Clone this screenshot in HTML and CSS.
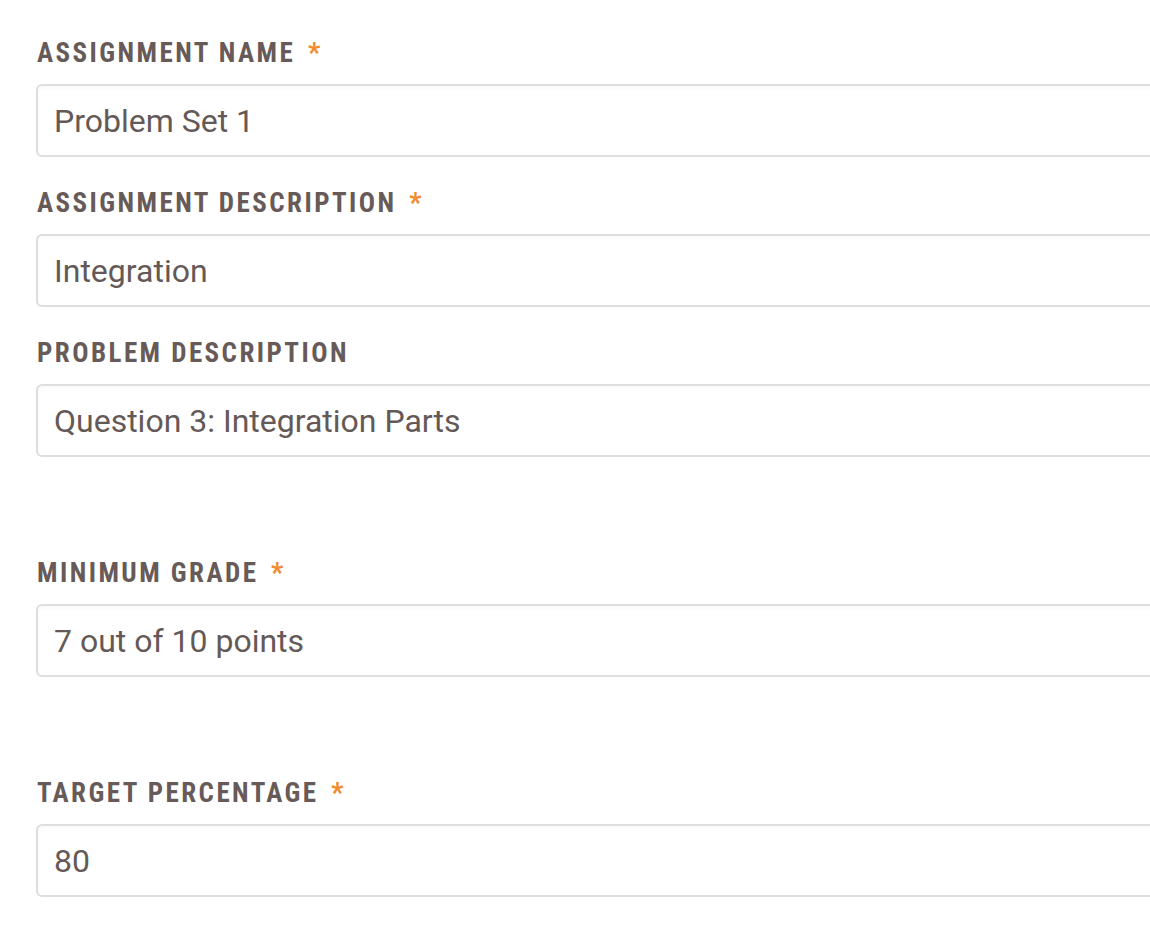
FILE: index.html
```html
<!DOCTYPE html>
<html lang="en">
<head>
<meta charset="utf-8">
<title>Assignment</title>
<link rel="stylesheet" href="styles.css">
</head>
<body>
<form class="form">
  <div class="field">
    <label class="label" for="f1">Assignment Name <span class="req">*</span></label>
    <input class="input" id="f1" type="text" value="Problem Set 1">
  </div>
  <div class="field">
    <label class="label" for="f2">Assignment Description <span class="req">*</span></label>
    <input class="input" id="f2" type="text" value="Integration">
  </div>
  <div class="field">
    <label class="label" for="f3">Problem Description</label>
    <input class="input" id="f3" type="text" value="Question 3: Integration Parts">
  </div>
  <div class="field field-spaced">
    <label class="label" for="f4">Minimum Grade <span class="req">*</span></label>
    <input class="input" id="f4" type="text" value="7 out of 10 points">
  </div>
  <div class="field field-spaced">
    <label class="label" for="f5">Target Percentage <span class="req">*</span></label>
    <input class="input" id="f5" type="text" value="80">
  </div>
</form>
</body>
</html>
```
FILE: styles.css
```css
html, body {
  margin: 0;
  padding: 0;
  background: #ffffff;
  overflow: hidden;
}

.form {
  display: flex;
  flex-direction: column;
  gap: 30px;
  width: 1180px;
  padding: 37px 0 0 36px;
  box-sizing: border-box;
}

.field {
  display: flex;
  flex-direction: column;
  gap: 15px;
}

.field-spaced {
  margin-top: 70px;
}

.label {
  font-family: "Roboto", "Liberation Sans", sans-serif;
  font-stretch: condensed;
  font-weight: 700;
  font-size: 27px;
  line-height: 32px;
  letter-spacing: 2.45px;
  text-transform: uppercase;
  color: #675a58;
  padding-left: 1px;
}

.req {
  color: #f28a2e;
  margin-left: 4px;
}

.input {
  display: block;
  box-sizing: border-box;
  width: 100%;
  height: 73px;
  margin: 0;
  padding: 0 16px;
  border: 2px solid #dfdddd;
  border-radius: 6px;
  background: #ffffff;
  box-shadow: inset 0 3px 4px rgba(0, 0, 0, 0.025);
  font-family: "Roboto", "Liberation Sans", sans-serif;
  font-size: 32px;
  font-weight: 400;
  color: #655957;
  outline: none;
}
```
